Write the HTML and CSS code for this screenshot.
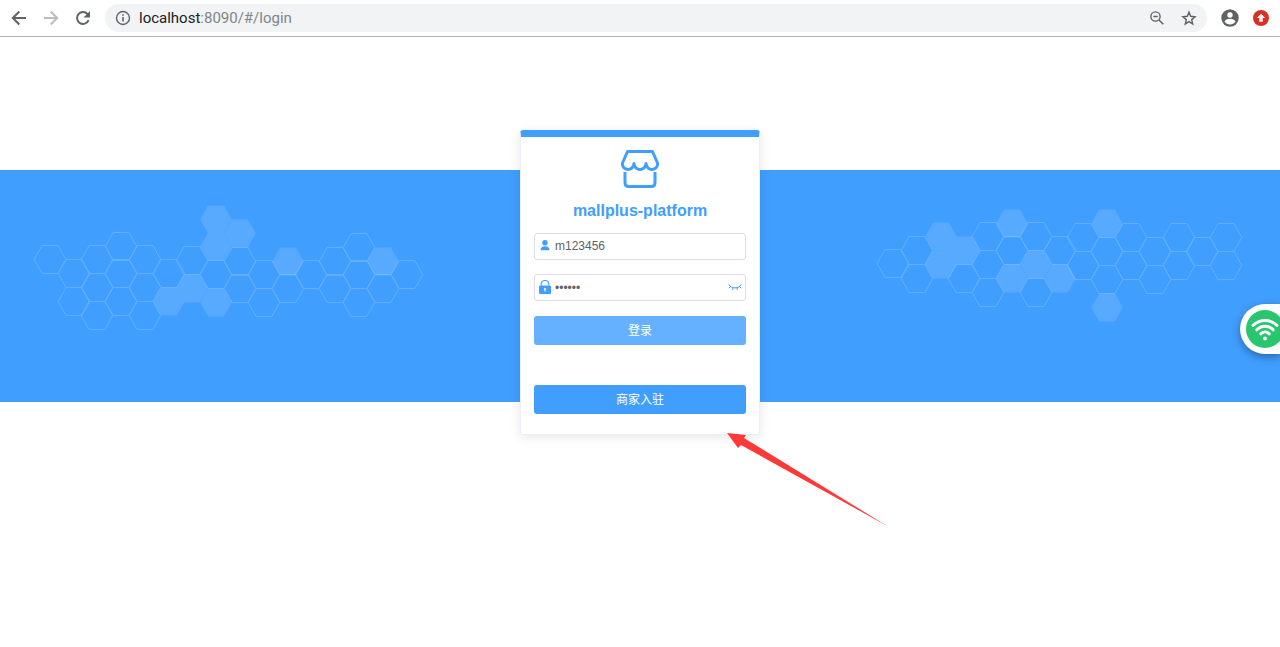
FILE: index.html
```html
<!DOCTYPE html>
<html lang="zh-CN">
<head>
    <meta charset="UTF-8">
    <meta name="viewport" content="width=device-width, initial-scale=1.0">
    <title>mallplus-platform</title>
    <link rel="stylesheet" href="styles.css">
</head>
<body>
    <header class="toolbar">
        <nav class="nav-buttons">
            <button class="icon-btn" type="button" aria-label="Back">
                <svg viewBox="0 0 16 16"><path d="M15 8H2M8.300 1.500L1.800 8l6.500 6.500" fill="none" stroke="#5f6368" stroke-width="2"/></svg>
            </button>
            <button class="icon-btn" type="button" aria-label="Forward" disabled>
                <svg viewBox="0 0 16 16"><path d="M1 8h13M7.700 1.500L14.200 8l-6.500 6.500" fill="none" stroke="#babcbe" stroke-width="2"/></svg>
            </button>
            <button class="icon-btn" type="button" aria-label="Reload">
                <svg viewBox="0 0 16 16"><path d="M13.600 10.200A6 6 0 1 1 12.600 4" fill="none" stroke="#5f6368" stroke-width="2"/><path d="M15 1v6.500H8.500z" fill="#5f6368"/></svg>
            </button>
        </nav>
        <div class="omnibox">
            <svg class="info" viewBox="0 0 16 16"><circle cx="8" cy="8" r="6.500" fill="none" stroke="#5f6368" stroke-width="1.400"/><path d="M7.200 7h1.600v4.500H7.200zM7.200 4.200h1.600v1.600H7.200z" fill="#5f6368"/></svg>
            <div class="url" role="textbox" aria-label="Address" contenteditable="true" spellcheck="false"><span class="host">localhost</span>:8090/#/login</div>
            <button class="icon-btn" type="button" aria-label="Zoom">
                <svg viewBox="0 0 16 16"><circle cx="6.500" cy="6.500" r="4.600" fill="none" stroke="#5f6368" stroke-width="1.400"/><path d="M4.300 6.500h4.400M10 10l4.300 4.300" fill="none" stroke="#5f6368" stroke-width="1.500"/></svg>
            </button>
            <button class="icon-btn" type="button" aria-label="Bookmark">
                <svg viewBox="0 0 16 16"><path d="M8 2.200l1.700 4.100 4.400.4-3.400 2.900 1 4.300L8 11.600l-3.700 2.300 1-4.300-3.400-2.900 4.400-.4z" fill="none" stroke="#5f6368" stroke-width="1.400"/></svg>
            </button>
        </div>
        <div class="profile">
            <button class="icon-btn avatar" type="button" aria-label="Profile">
                <svg viewBox="0 0 18 18"><circle cx="9" cy="9" r="8.700" fill="#5f6368"/><circle cx="9" cy="6" r="2.700" fill="#fff"/><path d="M3.500 12.400c1-2 3.600-2.700 5.500-2.700s4.500.7 5.500 2.700c-1.200 1.900-3.300 3-5.500 3s-4.300-1.100-5.500-3z" fill="#fff"/></svg>
            </button>
            <button class="icon-btn" type="button" aria-label="Update">
                <svg viewBox="0 0 16 16"><circle cx="8" cy="8" r="8" fill="#d93025"/><path d="M8 3.700L12.200 8H9.700v3.800H6.300V8H3.800z" fill="#fff"/></svg>
            </button>
        </div>
    </header>

    <main class="login-page">
        <div class="banner">
            <svg class="hexes hexes-left" viewBox="0 0 390 126">
                <defs>
                    <path id="hex" d="M-15.800 .5L-7.900-13.500H7.900L15.800 .5 7.900 14.500H-7.900z"/>
                </defs>
                <g class="hex-line">
                    <use href="#hex" x="16" y="55"/>
                    <use href="#hex" x="40" y="69"/><use href="#hex" x="40" y="97"/>
                    <use href="#hex" x="63" y="55"/><use href="#hex" x="63" y="83"/><use href="#hex" x="63" y="111"/>
                    <use href="#hex" x="87" y="42"/><use href="#hex" x="87" y="69"/><use href="#hex" x="87" y="97"/>
                    <use href="#hex" x="111" y="55"/><use href="#hex" x="111" y="83"/><use href="#hex" x="111" y="111"/>
                    <use href="#hex" x="135" y="69"/>
                    <use href="#hex" x="158" y="56"/>
                    <use href="#hex" x="182" y="70"/>
                    <use href="#hex" x="206" y="57"/><use href="#hex" x="206" y="84"/>
                    <use href="#hex" x="230" y="70"/><use href="#hex" x="230" y="98"/>
                    <use href="#hex" x="254" y="84"/>
                    <use href="#hex" x="277" y="70"/>
                    <use href="#hex" x="301" y="57"/><use href="#hex" x="301" y="84"/>
                    <use href="#hex" x="325" y="43"/><use href="#hex" x="325" y="70"/><use href="#hex" x="325" y="98"/>
                    <use href="#hex" x="349" y="84"/>
                    <use href="#hex" x="373" y="70"/>
                </g>
                <g class="hex-fill">
                    <use href="#hex" x="135" y="97"/>
                    <use href="#hex" x="158" y="84"/>
                    <use href="#hex" x="182" y="15"/><use href="#hex" x="182" y="42"/><use href="#hex" x="182" y="98"/>
                    <use href="#hex" x="206" y="29"/>
                    <use href="#hex" x="254" y="57"/>
                    <use href="#hex" x="349" y="57"/>
                </g>
            </svg>
            <svg class="hexes hexes-right" viewBox="0 0 366 114">
                <g class="hex-line">
                    <use href="#hex" x="16" y="55"/>
                    <use href="#hex" x="40" y="42"/><use href="#hex" x="40" y="70"/>
                    <use href="#hex" x="87" y="70"/>
                    <use href="#hex" x="111" y="28"/><use href="#hex" x="111" y="56"/><use href="#hex" x="111" y="84"/>
                    <use href="#hex" x="135" y="42"/>
                    <use href="#hex" x="159" y="28"/><use href="#hex" x="159" y="84"/>
                    <use href="#hex" x="183" y="42"/>
                    <use href="#hex" x="206" y="29"/><use href="#hex" x="206" y="57"/>
                    <use href="#hex" x="230" y="43"/><use href="#hex" x="230" y="71"/>
                    <use href="#hex" x="254" y="29"/><use href="#hex" x="254" y="57"/>
                    <use href="#hex" x="278" y="43"/><use href="#hex" x="278" y="71"/>
                    <use href="#hex" x="302" y="29"/><use href="#hex" x="302" y="57"/>
                    <use href="#hex" x="325" y="43"/>
                    <use href="#hex" x="349" y="29"/><use href="#hex" x="349" y="57"/>
                </g>
                <g class="hex-fill">
                    <use href="#hex" x="64" y="28"/><use href="#hex" x="64" y="56"/>
                    <use href="#hex" x="87" y="42"/>
                    <use href="#hex" x="135" y="15"/><use href="#hex" x="135" y="70"/>
                    <use href="#hex" x="159" y="56"/>
                    <use href="#hex" x="183" y="70"/>
                    <use href="#hex" x="230" y="15"/><use href="#hex" x="230" y="99"/>
                </g>
            </svg>
        </div>

        <form class="login-card">
            <svg class="logo" viewBox="0 0 38 38">
                <g fill="none" stroke="#409eff" stroke-width="3">
                    <path d="M6.500 1.500h25L36.500 13c.5 3.500-1.800 6.500-5.500 6.500-3 0-5.800-2.500-6-6-.2 3.500-3 6-6 6s-5.800-2.500-6-6c-.2 3.500-3 6-6 6-3.700 0-6-3-5.500-6.500z" stroke-linejoin="round"/>
                    <path d="M4 22v10.500c0 2.500 1.500 4 4 4h22c2.500 0 4-1.500 4-4V22"/>
                </g>
            </svg>
            <h1 class="title">mallplus-platform</h1>

            <div class="field">
                <svg class="field-icon" viewBox="0 0 14 14"><circle cx="7" cy="3.700" r="2.700" fill="#409eff"/><path d="M2.500 11.200c0-2.800 1.800-4 4.500-4s4.500 1.200 4.500 4z" fill="#409eff"/></svg>
                <input type="text" name="username" value="m123456" aria-label="用户名">
            </div>
            <div class="field">
                <svg class="field-icon" viewBox="0 0 14 14"><path d="M3.200 5.500V4a3.800 3.500 0 0 1 7.600 0v1.500" fill="none" stroke="#409eff" stroke-width="1.200"/><path d="M2.200 5.500h9.600a1.200 1.200 0 0 1 1.200 1.200V13a1 1 0 0 1-1 1H2a1 1 0 0 1-1-1V6.700a1.200 1.200 0 0 1 1.200-1.200z" fill="#409eff"/><path d="M7 8.200v3.300M5.900 8.800h2.200" stroke="#fff" stroke-width="1.200"/></svg>
                <input type="password" name="password" value="123456" aria-label="密码">
                <button class="icon-btn eye" type="button" aria-label="显示密码">
                    <svg viewBox="0 0 14 14"><path d="M.7 3.300C2 5.600 4.300 6.900 7 6.900s5-1.300 6.300-3.600M2.700 5.300L.9 7.200M5.200 6.600l-.7 2.300M8.800 6.600l.7 2.300M11.300 5.300l1.800 1.900" fill="none" stroke="#409eff"/></svg>
                </button>
            </div>

            <button class="btn btn-login" type="button">登录</button>
            <button class="btn btn-join" type="button">商家入驻</button>

            <svg class="pointer" viewBox="0 0 162 94"><path d="M0 0l19 2-2 3 144 88.500L14 12l-3 3z" fill="#ff3838"/></svg>
        </form>
    </main>

    <button class="wifi" type="button" aria-label="WiFi">
        <svg viewBox="0 0 38 38"><circle cx="19" cy="19" r="19" fill="#28c76f"/><g fill="none" stroke="#fff" stroke-width="3" stroke-linecap="round"><path d="M7 15.500c6.500-6.800 17.500-6.800 24 0M10.800 19.800c4.500-4.700 11.900-4.700 16.400 0M14.700 23.800c2.500-2.400 6.100-2.400 8.600 0"/></g><circle cx="19" cy="28.500" r="1.900" fill="#fff"/></svg>
    </button>
</body>
</html>
```

FILE: styles.css
```css
* {
    box-sizing: border-box;
}

body {
    margin: 0;
    min-height: 100vh;
    background: #fff;
    color: #606266;
    font-family: "Liberation Sans", "Noto Sans CJK SC", Arial, sans-serif;
    font-size: 12px;
    overflow-x: hidden;
}

svg {
    display: block;
}

button,
input {
    font-family: inherit;
    font-size: 12px;
}

.icon-btn {
    width: 16px;
    height: 16px;
    padding: 0;
    border: none;
    background: none;
    flex-shrink: 0;
    cursor: pointer;
}

.icon-btn svg {
    width: 100%;
    height: 100%;
}

/* browser toolbar */
.toolbar {
    display: flex;
    align-items: center;
    gap: 14px;
    padding: 4px 11px;
    border-bottom: 1px solid #b4b5b6;
}

.nav-buttons {
    display: flex;
    gap: 16px;
}

.omnibox {
    flex: 1;
    display: flex;
    align-items: center;
    gap: 16px;
    height: 28px;
    padding: 0 10px;
    border-radius: 14px;
    background: #f1f3f4;
}

.info {
    width: 16px;
    height: 16px;
    margin-right: -8px;
}

.url {
    flex: 1;
    color: #80868b;
    font-family: Roboto, "Noto Sans", sans-serif;
    font-size: 15px;
    line-height: 20px;
    outline: none;
}

.host {
    color: #202124;
}

.profile {
    display: flex;
    align-items: center;
    gap: 14px;
}

.avatar {
    width: 18px;
    height: 18px;
}

/* login page */
.login-page {
    display: grid;
    grid-template-columns: 1fr;
    grid-template-rows: 40px 1fr 33px;
    padding-top: 93px;
}

.banner {
    grid-area: 2 / 1;
    display: flex;
    justify-content: space-between;
    align-items: flex-start;
    padding: 34px 37px 0 34px;
    background: #409eff;
}

.hexes {
    overflow: visible;
}

.hexes-left {
    width: 390px;
}

.hexes-right {
    width: 366px;
    margin-top: 4px;
}

.hex-line {
    fill: none;
    stroke: #fff;
    stroke-width: 1;
    opacity: 0.18;
}

.hex-fill {
    fill: #fff;
    opacity: 0.12;
}

.login-card {
    grid-area: 1 / 1 / 4 / 2;
    justify-self: center;
    position: relative;
    display: flex;
    flex-direction: column;
    width: 240px;
    padding: 13px 13px 20px;
    border: 1px solid #ebeef5;
    border-top: 7px solid #409eff;
    border-radius: 3px;
    background: #fff;
    box-shadow: 0 2px 12px rgba(0, 0, 0, 0.1);
}

.logo {
    width: 38px;
    height: 38px;
    margin: 0 auto;
}

.title {
    margin: 12px 0 11px;
    color: #409eff;
    font-size: 16px;
    line-height: 22px;
    text-align: center;
}

.field {
    display: flex;
    align-items: center;
    height: 27px;
    margin-bottom: 14px;
    padding: 0 3px;
    border: 1px solid #dcdfe6;
    border-radius: 3px;
}

.field-icon {
    width: 14px;
    height: 14px;
    flex-shrink: 0;
    margin-bottom: 2px;
}

.field input {
    flex: 1;
    min-width: 0;
    height: 25px;
    padding: 0 3px 2px;
    border: none;
    outline: none;
    background: none;
    color: #606266;
}

.field input[type="password"] {
    padding-bottom: 0;
}

.eye {
    width: 14px;
    height: 14px;
}

.btn {
    height: 29px;
    padding: 0 0 2px;
    border: none;
    border-radius: 3px;
    background: #409eff;
    color: #fff;
    cursor: pointer;
}

.btn-login {
    margin: 1px 0 40px;
    background: #66b1ff;
}

/* red arrow over the corner of the card */
.pointer {
    position: absolute;
    top: 296px;
    left: 206px;
    width: 162px;
    height: 94px;
}

.wifi {
    position: fixed;
    top: 304px;
    right: 0;
    width: 40px;
    height: 50px;
    padding: 6px;
    border: none;
    border-radius: 25px 0 0 25px;
    background: #fff;
    box-shadow: 0 3px 8px rgba(0, 0, 0, 0.35);
    overflow: hidden;
    cursor: pointer;
}

.wifi svg {
    width: 38px;
    height: 38px;
}
```
